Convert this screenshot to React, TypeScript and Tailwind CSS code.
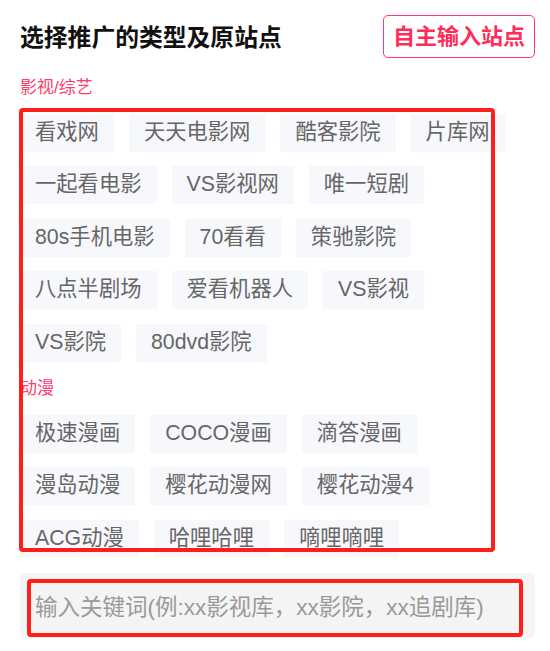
import React from "react";

const categories = [
  {
    name: "影视/综艺",
    sites: [
      "看戏网",
      "天天电影网",
      "酷客影院",
      "片库网",
      "一起看电影",
      "VS影视网",
      "唯一短剧",
      "80s手机电影",
      "70看看",
      "策驰影院",
      "八点半剧场",
      "爱看机器人",
      "VS影视",
      "VS影院",
      "80dvd影院",
    ],
  },
  {
    name: "动漫",
    sites: [
      "极速漫画",
      "COCO漫画",
      "滴答漫画",
      "漫岛动漫",
      "樱花动漫网",
      "樱花动漫4",
      "ACG动漫",
      "哈哩哈哩",
      "嘀哩嘀哩",
    ],
  },
];

const font = "font-['Liberation_Sans','Noto_Sans_CJK_SC',sans-serif]";

export default function App() {
  return (
    <div className={`w-[550px] h-[651px] bg-white pl-5 pr-[15px] pt-[15px] ${font}`}>
      {/* header */}
      <div className="flex items-center justify-between">
        <h1 className="text-[23.8px] leading-[30px] font-bold text-[#111] pt-[3px]">选择推广的类型及原站点</h1>
        <button className="h-[43px] px-[9px] border border-[#ff3b66] rounded-[5px] text-[22px] font-bold text-[#ff2d5a] leading-none">
          自主输入站点
        </button>
      </div>

      {/* site list */}
      <div className="relative mt-[18px]">
        {categories.map((cat, i) => (
          <div key={cat.name} className={i > 0 ? "mt-[15.5px]" : ""}>
            <div className="text-[17px] leading-[24px] text-[#ff3a6c] mb-[13.5px]">{cat.name}</div>
            <div className="flex flex-wrap gap-x-[15px] gap-y-[14.5px]">
              {cat.sites.map((site) => (
                <span
                  key={site}
                  className="h-[38px] px-[15px] flex items-center shrink-0 bg-[#f7f8fc] text-[21.3px] leading-none text-[#666]"
                >
                  {site}
                </span>
              ))}
            </div>
          </div>
        ))}
        {/* annotation frame */}
        <div className="absolute left-[-1px] top-[32px] w-[476px] h-[444px] border-4 border-[#ff1f1a] rounded-[4px] pointer-events-none" />
      </div>

      {/* keyword input */}
      <div className="relative mt-[15px] h-[65px] bg-[#f4f4f4] rounded-[6px] flex items-center">
        <input
          className="w-full bg-transparent outline-none pl-[15px] pt-[6px] text-[22.5px] text-[#333] placeholder:text-[#999]"
          placeholder="输入关键词(例:xx影视库，xx影院，xx追剧库)"
        />
        <div className="absolute left-[7px] top-[6px] right-[12px] bottom-[1px] border-4 border-[#ff1f1a] rounded-[4px] pointer-events-none" />
      </div>
    </div>
  );
}
